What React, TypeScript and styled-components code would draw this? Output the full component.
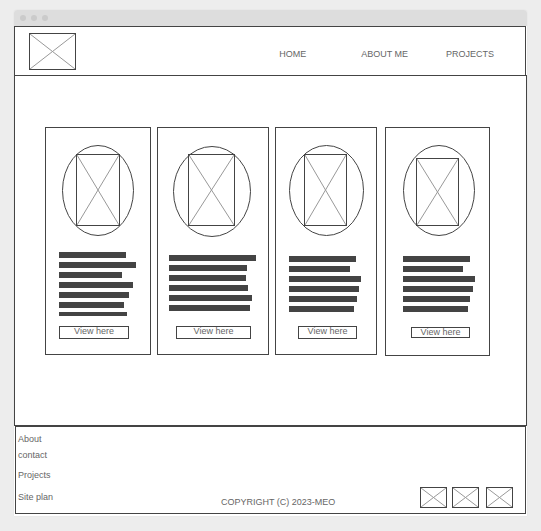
import React from "react";
import styled, { createGlobalStyle } from "styled-components";

const INK = "#444";
const TEXT = "#666";
const CROSS = "#999";

const GlobalStyle = createGlobalStyle`
  * { box-sizing: border-box; }
  body {
    margin: 0;
    background: #ededed;
    color: ${TEXT};
    font: 9px/12px "Liberation Sans", Arial, sans-serif;
  }
`;

const Page = styled.div`
  padding: 10px 14px 15px;
`;

const BrowserWindow = styled.div`
  background: #fff;
  border-radius: 3px 3px 0 0;
  padding-bottom: 2px;
  box-shadow: 0 0 1px #ccc;
`;

const TitleBar = styled.div`
  display: flex;
  align-items: center;
  gap: 5px;
  height: 16px;
  padding-left: 6px;
  background: #ddd;
  border-radius: 3px 3px 0 0;
`;

const Dot = styled.span`
  width: 6px;
  height: 6px;
  border-radius: 50%;
  background: #cbcbcb;
`;

const Header = styled.header`
  display: flex;
  justify-content: space-between;
  align-items: flex-start;
  margin-right: 1px;
  padding: 6px 31px 5px 14px;
  border: 1px solid ${INK};
  border-bottom: 0;
`;

const Nav = styled.nav`
  display: flex;
  padding-top: 15px;
`;

const TextLink = styled.a`
  color: inherit;
  text-decoration: none;
`;

const NavLink = styled(TextLink)<{ $before: number }>`
  margin-left: ${(p) => p.$before}px;
`;

const Main = styled.main`
  display: flex;
  align-items: flex-start;
  padding: 51px 36px 69px 30px;
  border: 1px solid ${INK};
`;

const Card = styled.article<{ $width: number; $before: number; $bottom: number }>`
  flex: ${(p) => p.$width} 1 ${(p) => p.$width}px;
  min-width: 0;
  margin-left: ${(p) => p.$before}px;
  padding: 17px 0 ${(p) => p.$bottom}px;
  border: 1px solid ${INK};
`;

const Drawing = styled.svg<{ $inset?: number }>`
  display: block;
  flex: none;
  margin-left: ${(p) => p.$inset ?? 0}px;
  fill: none;
  stroke: ${INK};
`;

const TextBlock = styled.div<{ $inset: number; $top: number; $height: number }>`
  display: flex;
  flex-direction: column;
  gap: 4px;
  min-height: ${(p) => p.$height}px;
  padding: ${(p) => p.$top}px 0 0 ${(p) => p.$inset}px;
`;

const TextBar = styled.div<{ $width: number; $thin: boolean }>`
  width: ${(p) => p.$width}px;
  height: ${(p) => (p.$thin ? 4 : 6)}px;
  background: ${INK};
`;

const ViewButton = styled.button<{ $inset: number; $width: number; $slim: boolean }>`
  display: block;
  width: ${(p) => p.$width}px;
  margin: 0 0 0 ${(p) => p.$inset}px;
  padding: 0 0 ${(p) => (p.$slim ? 0 : 2)}px;
  border: 1px solid ${INK};
  background: #fff;
  color: inherit;
  font: inherit;
  line-height: 9px;
  white-space: nowrap;
`;

const Footer = styled.footer`
  display: grid;
  grid-template-columns: 8fr auto 7fr;
  align-items: end;
  margin: 0 1px;
  padding: 6px 12px 5px 2px;
  border: 1px solid ${INK};
`;

const FooterLinks = styled.nav`
  display: flex;
  flex-direction: column;
  align-items: flex-start;
  padding-bottom: 5px;
`;

const FooterLink = styled(TextLink)<{ $above: number }>`
  margin-top: ${(p) => p.$above}px;
`;

const Copyright = styled.p`
  margin: 0;
`;

const Thumbs = styled.div`
  display: flex;
  justify-content: flex-end;
  align-items: flex-start;
`;

type Frame = { x: number; y: number; w: number; h: number };

function CrossedFrame({ x, y, w, h }: Frame) {
  return (
    <>
      <path
        stroke={CROSS}
        d={`M${x + 1} ${y + 1}L${x + w - 1} ${y + h - 1}M${x + w - 1} ${y + 1}L${x + 1} ${y + h - 1}`}
      />
      <rect x={x + 0.5} y={y + 0.5} width={w - 1} height={h - 1} />
    </>
  );
}

function Placeholder({ w, h, inset }: { w: number; h: number; inset?: number }) {
  return (
    <Drawing width={w} height={h} $inset={inset} aria-hidden="true">
      <CrossedFrame x={0} y={0} w={w} h={h} />
    </Drawing>
  );
}

const navLinks = [
  { label: "HOME", before: 0 },
  { label: "ABOUT ME", before: 55 },
  { label: "PROJECTS", before: 38 },
];

const cards = [
  {
    width: 106, before: 0, bottom: 15,
    oval: { inset: 16, w: 72, top: 0 }, frame: { x: 14, y: 9, w: 44, h: 72 },
    text: { inset: 13, top: 15, height: 89 }, bars: [67, 77, 63, 74, 70, 65, 68],
    button: { inset: 13, width: 70, slim: false },
  },
  {
    width: 112, before: 6, bottom: 15,
    oval: { inset: 15, w: 78, top: 1 }, frame: { x: 15, y: 9, w: 47, h: 72 },
    text: { inset: 11, top: 18, height: 89 }, bars: [87, 78, 77, 79, 83, 81],
    button: { inset: 18, width: 75, slim: false },
  },
  {
    width: 102, before: 6, bottom: 15,
    oval: { inset: 13, w: 75, top: 0 }, frame: { x: 15, y: 9, w: 43, h: 72 },
    text: { inset: 13, top: 19, height: 89 }, bars: [67, 61, 72, 70, 68, 65],
    button: { inset: 22, width: 59, slim: false },
  },
  {
    width: 105, before: 8, bottom: 17,
    oval: { inset: 17, w: 72, top: 0 }, frame: { x: 13, y: 13, w: 43, h: 68 },
    text: { inset: 17, top: 19, height: 90 }, bars: [67, 60, 72, 70, 67, 65],
    button: { inset: 25, width: 59, slim: true },
  },
];

const footerLinks = [
  { label: "About", above: 0 },
  { label: "contact", above: 4 },
  { label: "Projects", above: 8 },
  { label: "Site plan", above: 10 },
];

export default function App() {
  return (
    <Page>
      <GlobalStyle />
      <BrowserWindow>
        <TitleBar>
          <Dot />
          <Dot />
          <Dot />
        </TitleBar>
        <Header>
          <Placeholder w={47} h={37} />
          <Nav aria-label="Primary">
            {navLinks.map((l) => (
              <NavLink key={l.label} href="#" $before={l.before}>{l.label}</NavLink>
            ))}
          </Nav>
        </Header>
        <Main>
          {cards.map((c, i) => (
            <Card key={i} $width={c.width} $before={c.before} $bottom={c.bottom}>
              <Drawing width={c.oval.w} height={92} $inset={c.oval.inset} aria-hidden="true">
                <CrossedFrame {...c.frame} />
                <ellipse
                  cx={c.oval.w / 2}
                  cy={c.oval.top + 45.5}
                  rx={c.oval.w / 2 - 0.5}
                  ry={45}
                />
              </Drawing>
              <TextBlock $inset={c.text.inset} $top={c.text.top} $height={c.text.height}>
                {c.bars.map((w, n) => (
                  <TextBar key={n} $width={w} $thin={n === 6} />
                ))}
              </TextBlock>
              <ViewButton
                type="button"
                $inset={c.button.inset}
                $width={c.button.width}
                $slim={c.button.slim}
              >
                View here
              </ViewButton>
            </Card>
          ))}
        </Main>
        <Footer>
          <FooterLinks aria-label="Footer">
            {footerLinks.map((l) => (
              <FooterLink key={l.label} href="#" $above={l.above}>{l.label}</FooterLink>
            ))}
          </FooterLinks>
          <Copyright>COPYRIGHT (C) 2023-MEO</Copyright>
          <Thumbs>
            <Placeholder w={27} h={21} />
            <Placeholder w={27} h={21} inset={5} />
            <Placeholder w={27} h={21} inset={7} />
          </Thumbs>
        </Footer>
      </BrowserWindow>
    </Page>
  );
}
